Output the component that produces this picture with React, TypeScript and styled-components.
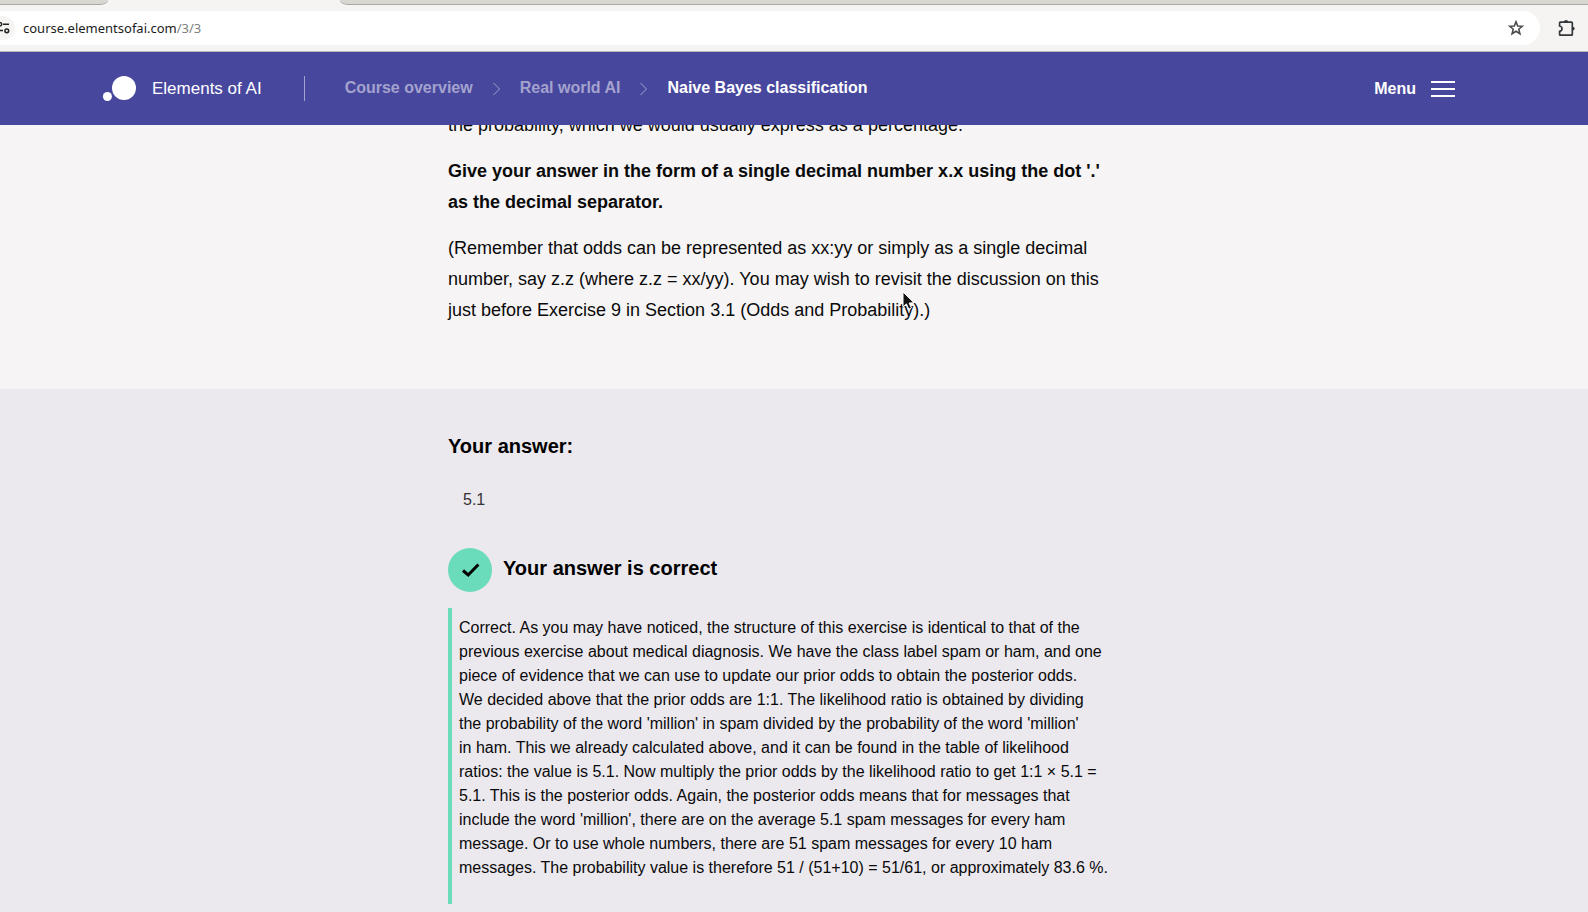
import React from "react";
import styled, { createGlobalStyle } from "styled-components";

const GlobalStyle = createGlobalStyle`
  * { box-sizing: border-box; }
  body {
    margin: 0;
    background: #ebe8ee;
    color: #0a0a0a;
    font-family: "Liberation Sans", Arial, sans-serif;
  }
`;

const Page = styled.div`
  min-height: 100vh;
  display: flex;
  flex-direction: column;
  overflow: hidden;
`;

const TabStrip = styled.div`
  display: flex;
  height: 5px;
  background: #f5f4f2;
`;

const Tab = styled.div<{ $side: "left" | "right" }>`
  background: #dad7d2;
  border-bottom: 1px solid #a9a8a6;
  ${(p) =>
    p.$side === "left"
      ? "width: 108px; border-bottom-right-radius: 8px 5px;"
      : "flex: 1; margin-left: 232px; border-bottom-left-radius: 8px 5px;"}
`;

const BrowserBar = styled.div`
  display: flex;
  align-items: center;
  gap: 18px;
  height: 47px;
  padding: 0 13px 1px 0;
  background: #f5f4f2;
  border-bottom: 1px solid #b9b9b9;
`;

const AddressBar = styled.div`
  display: flex;
  align-items: center;
  flex: 1;
  height: 34px;
  padding-right: 16px;
  background: #fff;
  border-radius: 0 17px 17px 0;
`;

const IconButton = styled.button`
  display: flex;
  padding: 0;
  border: 0;
  background: none;
  color: #33373a;
`;

const SiteButton = styled(IconButton)`
  width: 15px;
  height: 24px;
  align-items: center;
  background: #f5f4f2;
  border-radius: 0 12px 12px 0;
`;

const Address = styled.div`
  flex: 1;
  padding-left: 8px;
  font: 13px/20px "Noto Sans", sans-serif;
  color: #1c1c1c;

  span { color: #808080; }
`;

const Header = styled.header`
  display: flex;
  align-items: center;
  height: 73px;
  padding: 0 133px 0 102px;
  background: #48479e;
  color: #fff;
`;

const Brand = styled.a`
  display: flex;
  align-items: center;
  gap: 16px;
  padding-right: 42px;
  border-right: 1px solid #a3a3ce;
  color: #fff;
  font-size: 17px;
  line-height: 25px;
  text-decoration: none;
  white-space: nowrap;
`;

const Crumbs = styled.nav`
  display: flex;
  align-items: center;
  flex: 1;
  gap: 19px;
  padding-left: 40px;
  white-space: nowrap;
`;

const Crumb = styled.a<{ $current?: boolean }>`
  padding-bottom: 2px;
  color: ${(p) => (p.$current ? "#fff" : "#a3a3ce")};
  font-size: 16px;
  line-height: 24px;
  font-weight: 700;
  text-decoration: none;
`;

const MenuButton = styled.button`
  display: flex;
  align-items: center;
  gap: 15px;
  padding: 0;
  border: 0;
  background: none;
  color: #fff;
  font: 700 16px/24px "Liberation Sans", Arial, sans-serif;
`;

const Exercise = styled.section`
  padding-bottom: 63px;
  background: #f6f4f5;
  overflow: hidden;
`;

const Column = styled.div`
  width: 100%;
  max-width: 692px;
  margin: 0 auto;
`;

const ScrolledText = styled(Column)`
  margin-top: -15px;
`;

const Paragraph = styled.p<{ $bold?: boolean }>`
  position: relative;
  margin: 0 0 15px;
  font-size: 18px;
  line-height: 31px;
  font-weight: ${(p) => (p.$bold ? 700 : 400)};
  white-space: nowrap;

  &:last-child { margin-bottom: 0; }
`;

const Cursor = styled.svg`
  position: absolute;
  top: 58px;
  left: 454px;
`;

const Answer = styled.section`
  flex: 1;
  padding: 42px 0 8px;
  background: #ebe8ee;
`;

const Heading = styled.h3`
  margin: 0;
  font-size: 20px;
  line-height: 30px;
  font-weight: 700;
  color: #000;
`;

const AnswerInput = styled.input`
  display: block;
  width: 100%;
  height: 48px;
  margin: 15px 0 24px;
  padding: 0 15px;
  border: 0;
  background: none;
  color: #333;
  font: 16px/24px "Liberation Sans", Arial, sans-serif;
`;

const Result = styled.div`
  display: flex;
  align-items: center;
  gap: 11px;
  height: 44px;

  ${Heading} { padding-bottom: 4px; }
`;

const Badge = styled.span`
  display: flex;
  align-items: center;
  justify-content: center;
  width: 44px;
  height: 44px;
  border-radius: 50%;
  background: #6adcbb;
`;

const Feedback = styled.p`
  margin: 16px 0 0;
  padding: 8px 0 24px 7px;
  border-left: 4px solid #6adcbb;
  font-size: 16px;
  line-height: 24px;
  white-space: nowrap;
`;

const Chevron = () => (
  <svg width="9" height="14" viewBox="0 0 9 14" fill="none" stroke="#a3a3ce" aria-hidden="true">
    <path d="M1.5 1 L7.5 7 L1.5 13" />
  </svg>
);

const lines = (items: string[]) =>
  items.map((line, i) => (
    <React.Fragment key={line}>
      {i > 0 && <br />}
      {line}
    </React.Fragment>
  ));

const reminder = [
  "(Remember that odds can be represented as xx:yy or simply as a single decimal",
  "number, say z.z (where z.z = xx/yy). You may wish to revisit the discussion on this",
  "just before Exercise 9 in Section 3.1 (Odds and Probability).)",
];

const feedback = [
  "Correct. As you may have noticed, the structure of this exercise is identical to that of the",
  "previous exercise about medical diagnosis. We have the class label spam or ham, and one",
  "piece of evidence that we can use to update our prior odds to obtain the posterior odds.",
  "We decided above that the prior odds are 1:1. The likelihood ratio is obtained by dividing",
  "the probability of the word 'million' in spam divided by the probability of the word 'million'",
  "in ham. This we already calculated above, and it can be found in the table of likelihood",
  "ratios: the value is 5.1. Now multiply the prior odds by the likelihood ratio to get 1:1 × 5.1 =",
  "5.1. This is the posterior odds. Again, the posterior odds means that for messages that",
  "include the word 'million', there are on the average 5.1 spam messages for every ham",
  "message. Or to use whole numbers, there are 51 spam messages for every 10 ham",
  "messages. The probability value is therefore 51 / (51+10) = 51/61, or approximately 83.6 %.",
];

export default function App() {
  return (
    <Page>
      <GlobalStyle />
      <TabStrip>
        <Tab $side="left" />
        <Tab $side="right" />
      </TabStrip>
      <BrowserBar>
        <AddressBar>
          <SiteButton aria-label="View site information">
            <svg width="10" height="12" viewBox="0 0 10 12" fill="none" stroke="#222" strokeWidth="1.5">
              <path d="M3 2.3H9M0 8.5H3" />
              <circle cx="0" cy="2.3" r="1.7" />
              <circle cx="6.8" cy="8.8" r="1.9" />
            </svg>
          </SiteButton>
          <Address>
            course.elementsofai.com<span>/3/3</span>
          </Address>
          <IconButton aria-label="Bookmark this page">
            <svg width="16" height="16" viewBox="0 0 16 16" fill="none" stroke="#4a4a4c" strokeWidth="1.6">
              <path d="M8 1.8 L9.7 6 L14.2 6.3 L10.8 9.2 L11.9 13.7 L8 11.3 L4.1 13.7 L5.2 9.2 L1.8 6.3 L6.3 6 Z" />
            </svg>
          </IconButton>
        </AddressBar>
        <IconButton aria-label="Extensions">
          <svg width="17" height="18" viewBox="0 0 17 18">
            <path
              d="M2.2 3.2H13.6Q14.3 3.2 14.3 3.9V15.4Q14.3 16.1 13.6 16.1H2.2Q1.6 16.1 1.6 15.4V12.4Q4 11.9 4 9.7Q4 7.4 1.6 7V3.9Q1.6 3.2 2.2 3.2Z"
              fill="none"
              stroke="currentColor"
              strokeWidth="1.7"
            />
            <path d="M5.8 3Q6 .9 8 .9T10.2 3ZM14.4 7.4Q16.7 7.7 16.7 9.6T14.4 11.8Z" fill="currentColor" />
          </svg>
        </IconButton>
      </BrowserBar>

      <Header>
        <Brand href="#">
          <svg width="34" height="25" viewBox="0 0 34 25" fill="#fff" aria-hidden="true">
            <circle cx="22" cy="12" r="12" />
            <circle cx="5.4" cy="20.5" r="4.5" />
          </svg>
          Elements of AI
        </Brand>
        <Crumbs aria-label="Breadcrumb">
          <Crumb href="#">Course overview</Crumb>
          <Chevron />
          <Crumb href="#">Real world AI</Crumb>
          <Chevron />
          <Crumb href="#" $current>
            Naive Bayes classification
          </Crumb>
        </Crumbs>
        <MenuButton>
          Menu
          <svg width="24" height="16" viewBox="0 0 24 16" fill="#fff" aria-hidden="true">
            <path d="M0 0H24V2H0ZM0 7H24V9H0ZM0 14H24V16H0Z" />
          </svg>
        </MenuButton>
      </Header>

      <Exercise>
        <ScrolledText>
          <Paragraph>the probability, which we would usually express as a percentage.</Paragraph>
          <Paragraph $bold>
            {lines([
              "Give your answer in the form of a single decimal number x.x using the dot '.'",
              "as the decimal separator.",
            ])}
          </Paragraph>
          <Paragraph>
            {lines(reminder)}
            <Cursor width="14" height="20" viewBox="0 0 14 20" aria-hidden="true">
              <path
                d="M1 1 V16 L4.4 12.9 L6.8 18.2 L9.4 17 L7.1 12 L12 11.8 Z"
                fill="#111"
                stroke="#fff"
                strokeWidth="1"
              />
            </Cursor>
          </Paragraph>
        </ScrolledText>
      </Exercise>

      <Answer>
        <Column>
          <Heading id="answer-label">Your answer:</Heading>
          <AnswerInput aria-labelledby="answer-label" readOnly value="5.1" />
          <Result>
            <Badge>
              <svg width="20" height="16" viewBox="0 0 20 16" fill="none" stroke="#000" strokeWidth="3" aria-hidden="true">
                <path d="M3 8.5 L8.2 13 L18.4 2.5" />
              </svg>
            </Badge>
            <Heading>Your answer is correct</Heading>
          </Result>
          <Feedback>{lines(feedback)}</Feedback>
        </Column>
      </Answer>
    </Page>
  );
}
